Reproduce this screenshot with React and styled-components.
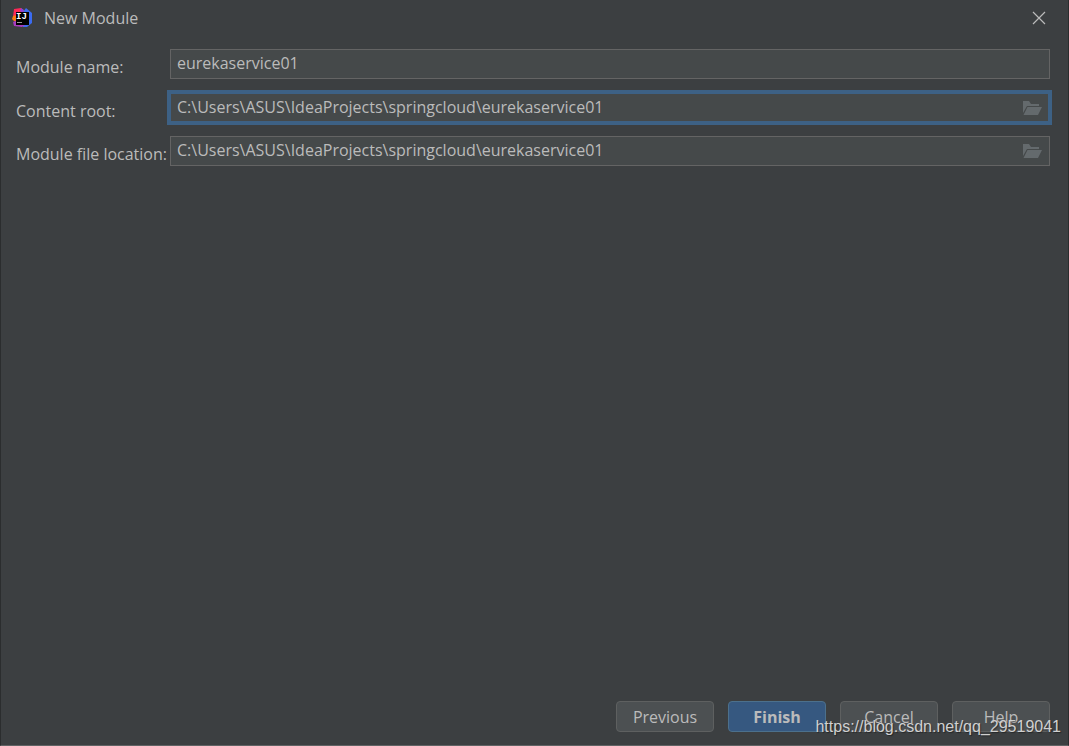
import React, { useState } from "react";
import styled, { createGlobalStyle, css } from "styled-components";

const colors = {
  background: "#3c3f41",
  field: "#45494a",
  fieldBorder: "#646464",
  focus: "#3d6185",
  button: "#4c5052",
  buttonBorder: "#5e6060",
  primary: "#365880",
  primaryBorder: "#4c708c",
  text: "#bbbbbb",
  icon: "#646a6d",
};

const GlobalStyle = createGlobalStyle`
  * {
    box-sizing: border-box;
  }

  body {
    margin: 0;
    background: ${colors.background};
    color: ${colors.text};
    font-family: "Open Sans", "Noto Sans", sans-serif;
    font-size: 16px;
  }
`;

const Dialog = styled.div`
  position: relative;
  display: flex;
  flex-direction: column;
  min-height: 100vh;
  background: ${colors.background};
  border: 1px solid #606364;
  border-top: none;
  border-left-color: #2b2d2e;
  border-right-color: #2b2d2e;
`;

const TitleBar = styled.header`
  display: flex;
  align-items: center;
  height: 36px;
  padding: 0 20px 0 11px;
`;

const Title = styled.h1`
  flex: 1;
  margin: 0 0 0 12px;
  font-size: 16px;
  font-weight: 400;
  line-height: 24px;
`;

const CloseButton = styled.button`
  display: flex;
  padding: 2px;
  border: none;
  background: transparent;
  color: ${colors.text};
`;

const Form = styled.form`
  flex: 1;
  display: flex;
  flex-direction: column;
  padding: 13px 18px 13px 15px;
`;

const Fields = styled.div`
  display: flex;
  flex-direction: column;
  gap: 11px;
`;

const Row = styled.div`
  display: grid;
  grid-template-columns: 151px 1fr;
  align-items: center;
  column-gap: 3px;
`;

const Label = styled.label`
  padding-top: 6px;
  line-height: 24px;
  white-space: nowrap;
`;

const Field = styled.div`
  display: flex;
  align-items: center;
  height: 30px;
  padding-right: 7px;
  background: ${colors.field};
  border: 1px solid ${colors.fieldBorder};

  ${({ $active }) =>
    $active &&
    css`
      height: 35px;
      margin: 0 -2px 0 -3px;
      border: 4px solid ${colors.focus};
      padding-right: 6px;
    `}
`;

const TextInput = styled.input`
  flex: 1;
  min-width: 0;
  padding: 0 6px 2px;
  border: none;
  outline: none;
  background: transparent;
  color: ${colors.text};
  font: inherit;
  line-height: 24px;
`;

const BrowseButton = styled.button`
  display: flex;
  padding: 0;
  border: none;
  background: transparent;
  color: ${colors.icon};
`;

const Actions = styled.footer`
  display: flex;
  justify-content: flex-end;
  gap: 14px;
  margin-top: auto;
`;

const Button = styled.button`
  width: 98px;
  height: 31px;
  padding: 0;
  border: 1px solid
    ${({ $primary }) => ($primary ? colors.primaryBorder : colors.buttonBorder)};
  border-radius: 4px;
  background: ${({ $primary }) => ($primary ? colors.primary : colors.button)};
  color: ${colors.text};
  font: inherit;
  font-weight: ${({ $primary }) => ($primary ? 700 : 400)};
`;

const Watermark = styled.span`
  position: absolute;
  right: 7px;
  bottom: 8px;
  color: #d0d0d0;
  font-family: "Liberation Sans", Arial, sans-serif;
  font-size: 16px;
  line-height: 20px;
  text-shadow: 1px 1px 1px rgba(0, 0, 0, 0.4);
  pointer-events: none;
`;

const IdeaLogo = () => (
  <svg width="20" height="20" viewBox="0 0 20 20" aria-hidden="true">
    <path d="M2 1 9 0 12 3 8 12 1 9Z" fill="#fe2857" />
    <path d="M1 8 5 7 6 14 2 13 0 11Z" fill="#f97a12" />
    <path d="M11 4 14 0 20 5V15L15 19H11L10 14Z" fill="#3b6bf0" />
    <path d="M1 14 8 11 13 17 10 19 2 18Z" fill="#a93cc0" />
    <path d="M9 0 12 2 11 5 8 3Z" fill="#8b45d6" />
    <rect x="4" y="4" width="13" height="13" fill="#000" />
    <text
      x="4"
      y="11"
      fill="#fff"
      fontFamily="Liberation Mono, monospace"
      fontSize="9"
      fontWeight="700"
    >
      IJ
    </text>
    <rect x="5" y="14" width="5" height="1" fill="#999" />
  </svg>
);

const CloseIcon = () => (
  <svg width="14" height="14" viewBox="0 0 14 14" aria-hidden="true">
    <path d="M1 1 13 13M13 1 1 13" stroke="currentColor" strokeWidth="1.2" />
  </svg>
);

const FolderIcon = () => (
  <svg width="19" height="14" viewBox="0 0 19 14" aria-hidden="true">
    <path
      d="M0 0H6L8 3H16V5H4L0 12Z M4.5 6H19L15 14H0.5Z"
      fill="currentColor"
    />
  </svg>
);

const FIELDS = [
  { id: "moduleName", label: "Module name:", browse: false },
  { id: "contentRoot", label: "Content root:", browse: true },
  { id: "fileLocation", label: "Module file location:", browse: true },
];

const App = () => {
  const [active, setActive] = useState("contentRoot");
  const [values, setValues] = useState({
    moduleName: "eurekaservice01",
    contentRoot: "C:\\Users\\ASUS\\IdeaProjects\\springcloud\\eurekaservice01",
    fileLocation: "C:\\Users\\ASUS\\IdeaProjects\\springcloud\\eurekaservice01",
  });

  const handleChange = (e) => {
    setValues({ ...values, [e.target.id]: e.target.value });
  };

  return (
    <>
      <GlobalStyle />
      <Dialog role="dialog" aria-labelledby="dialogTitle">
        <TitleBar>
          <IdeaLogo />
          <Title id="dialogTitle">New Module</Title>
          <CloseButton type="button" aria-label="Close">
            <CloseIcon />
          </CloseButton>
        </TitleBar>

        <Form onSubmit={(e) => e.preventDefault()}>
          <Fields>
            {FIELDS.map(({ id, label, browse }) => (
              <Row key={id}>
                <Label htmlFor={id}>{label}</Label>
                <Field $active={active === id}>
                  <TextInput
                    id={id}
                    type="text"
                    spellCheck={false}
                    value={values[id]}
                    onChange={handleChange}
                    onFocus={() => setActive(id)}
                  />
                  {browse && (
                    <BrowseButton type="button" aria-label="Browse">
                      <FolderIcon />
                    </BrowseButton>
                  )}
                </Field>
              </Row>
            ))}
          </Fields>

          <Actions>
            <Button type="button">Previous</Button>
            <Button type="submit" $primary>
              Finish
            </Button>
            <Button type="button">Cancel</Button>
            <Button type="button">Help</Button>
          </Actions>
        </Form>

        <Watermark>https://blog.csdn.net/qq_29519041</Watermark>
      </Dialog>
    </>
  );
};

export default App;
